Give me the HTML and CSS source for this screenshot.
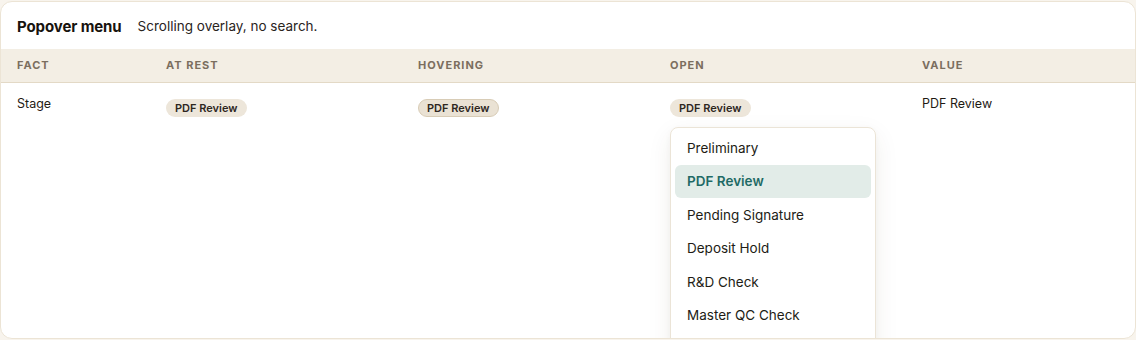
FILE: index.html
```html
<!DOCTYPE html>
<html>
<head>
<meta charset="utf-8">
<link rel="stylesheet" href="styles.css">
</head>
<body>
<div class="card">
  <div class="card-head">
    <span class="title">Popover menu</span>
    <span class="subtitle">Scrolling overlay, no search.</span>
  </div>
  <div class="grid">
    <div class="th">Fact</div>
    <div class="th">At rest</div>
    <div class="th">Hovering</div>
    <div class="th">Open</div>
    <div class="th">Value</div>

    <div class="td">Stage</div>
    <div class="td"><span class="pill">PDF Review</span></div>
    <div class="td"><span class="pill hover">PDF Review</span></div>
    <div class="td open-cell">
      <span class="pill">PDF Review</span>
      <div class="menu">
        <div class="item">Preliminary</div>
        <div class="item active">PDF Review</div>
        <div class="item">Pending Signature</div>
        <div class="item">Deposit Hold</div>
        <div class="item">R&amp;D Check</div>
        <div class="item">Master QC Check</div>
      </div>
    </div>
    <div class="td">PDF Review</div>
  </div>
</div>
</body>
</html>
```

FILE: styles.css
```css
* { box-sizing: border-box; }
html, body { margin: 0; padding: 0; }
body {
  background: #f8f4ed;
  padding-top: 1px;
  font-family: Inter, "Noto Sans", sans-serif;
  color: #1f1a14;
}
.card {
  width: 1136px;
  height: 338px;
  background: #ffffff;
  border: 1px solid #ece4d5;
  border-radius: 12px;
  overflow: hidden;
}
.card-head {
  height: 47px;
  display: flex;
  align-items: center;
  gap: 16px;
  padding: 0 16px;
  padding-top: 1px;
}
.title {
  font-size: 15px;
  font-weight: 700;
  color: #17130e;
  letter-spacing: -0.1px;
}
.subtitle {
  font-size: 13.5px;
  color: #2a241d;
}
.grid {
  display: grid;
  grid-template-columns: 149px 252px 252px 252px 1fr;
}
.th {
  height: 34px;
  background: #f3eee4;
  border-bottom: 1px solid #e3d9c6;
  display: flex;
  align-items: center;
  padding: 0 16px 1px;
  font-size: 11px;
  font-weight: 700;
  letter-spacing: 1px;
  text-transform: uppercase;
  color: #7b6e5f;
}
.td {
  padding: 13px 16px;
  font-size: 12.5px;
  line-height: 16px;
  color: #1f1a14;
}
.pill {
  display: inline-block;
  margin-top: 3px;
  padding: 0 8px;
  height: 18px;
  line-height: 16px;
  border: 1px solid transparent;
  border-radius: 9px;
  background: #ede6da;
  font-size: 11px;
  font-weight: 600;
  color: #2e271f;
}
.pill.hover {
  background: #eae2d4;
  border-color: #d8ccb6;
}
.open-cell {
  position: relative;
}
.menu {
  position: absolute;
  left: 16px;
  top: 44px;
  width: 206px;
  background: #ffffff;
  border: 1px solid #ebe4d7;
  border-radius: 8px;
  padding: 3px 4px 24px;
  box-shadow: 0 8px 24px rgba(80, 60, 30, 0.08), 0 2px 6px rgba(80, 60, 30, 0.04);
}
.item {
  height: 33.5px;
  display: flex;
  align-items: center;
  padding: 0 12px;
  border-radius: 6px;
  font-size: 13.5px;
  color: #221c15;
}
.item.active {
  background: #e2ece8;
  color: #1e6a65;
  font-weight: 600;
}
```
